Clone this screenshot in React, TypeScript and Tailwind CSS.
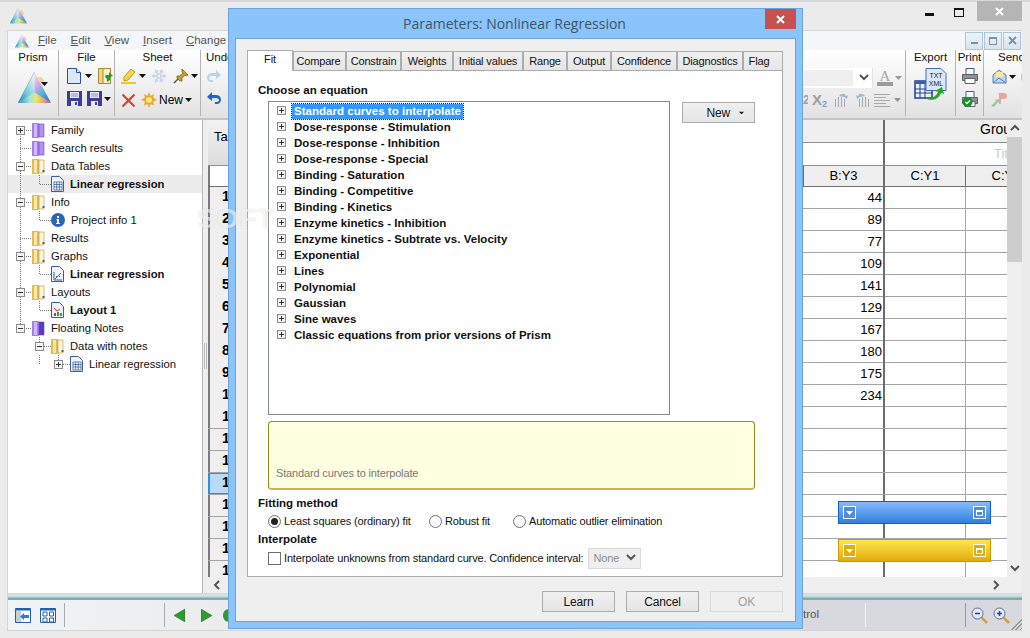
import React from "react";
import { Snowflake } from "lucide-react";

const ui = "font-['Liberation_Sans',Arial,sans-serif]";

const Caret = ({ className = "" }: { className?: string }) => (
  <svg width="7" height="4" viewBox="0 0 7 4" className={`shrink-0 ${className}`}>
    <path d="M0 0h7L3.500 4z" fill="#111" />
  </svg>
);

const Prism = ({ size = 32, id }: { size?: number; id: string }) => (
  <svg width={size} height={size} viewBox="0 0 32 32" className="shrink-0">
    <defs>
      <linearGradient id={`${id}-l`} x1="0.8" y1="0" x2="0" y2="1">
        <stop offset="0" stopColor="#e8f6f8" />
        <stop offset="0.5" stopColor="#7fd0dc" />
        <stop offset="1" stopColor="#1f7fa8" />
      </linearGradient>
      <linearGradient id={`${id}-r`} x1="0.2" y1="0" x2="0.8" y2="1">
        <stop offset="0" stopColor="#fbd3d8" />
        <stop offset="0.35" stopColor="#c9a6e8" />
        <stop offset="0.6" stopColor="#58b8d8" />
        <stop offset="1" stopColor="#3a6fc0" />
      </linearGradient>
      <linearGradient id={`${id}-b`} x1="0" y1="0" x2="1" y2="0">
        <stop offset="0" stopColor="#2f8cb8" />
        <stop offset="0.35" stopColor="#9fe6e0" />
        <stop offset="0.55" stopColor="#e8e86a" />
        <stop offset="0.75" stopColor="#f0a868" />
        <stop offset="1" stopColor="#b050b8" />
      </linearGradient>
    </defs>
    <path d="M16 1 16 21 0 31z" fill={`url(#${id}-l)`} />
    <path d="M16 1 16 21 32 31z" fill={`url(#${id}-r)`} />
    <path d="M0 31 16 21 32 31z" fill={`url(#${id}-b)`} />
    <path d="M19 6l5 8 3-1-4-7z" fill="#f5c26a" opacity=".7" />
    <path d="M0 31 16 1" stroke="#2a7f9f" strokeWidth=".6" opacity=".6" />
  </svg>
);

const PageIcon = () => (
  <svg width="14" height="16" viewBox="0 0 14 16" className="shrink-0">
    <path d="M.5.5h9l4 4v11H.5z" fill="#dbe8fb" stroke="#2b4f9e" />
    <path d="M9.500.5v4h4" fill="#fff" stroke="#2b4f9e" />
  </svg>
);

const OpenIcon = () => (
  <svg width="16" height="16" viewBox="0 0 16 16" className="shrink-0">
    <path d="M.5.5h12v15H.5z" fill="#f2d481" stroke="#a98a3a" />
    <path d="M5 .5h7.500v15H5z" fill="#fdf3c9" stroke="#a98a3a" />
    <path d="M8 7h3V4l4 4-3 1v3l-3 2v-3l-2-2z" fill="#1e9a33" />
  </svg>
);

const Floppy = () => (
  <svg width="15" height="15" viewBox="0 0 15 15" className="shrink-0">
    <path d="M0 0h15v15H0z" fill="#3d3c96" />
    <path d="M3 1h9v6H3z" fill="#e6e9f6" />
    <path d="M4 3h7M4 5h7" stroke="#8b8fc6" />
    <path d="M4 10h7v5H4z" fill="#e6e9f6" />
    <path d="M8 11h2v3H8z" fill="#3d3c96" />
  </svg>
);

const Highlighter = () => (
  <svg width="16" height="16" viewBox="0 0 16 16" className="shrink-0">
    <path d="M3 9 10 1l4 3-7 8-4 1z" fill="#f2d64b" stroke="#b89b22" />
    <path d="M0 14h15v2H0z" fill="#f2c81c" />
  </svg>
);

const Pin = () => (
  <svg width="16" height="16" viewBox="0 0 16 16" className="shrink-0">
    <path d="M9 1l6 6-2 1-1-1-3 3 0 3-2 0-3-3 0-2 3 0 3-3-1-1z" fill="#c9a227" stroke="#75661a" strokeWidth=".8" />
    <path d="M5 11 1 15" stroke="#555" strokeWidth="1.400" />
  </svg>
);

const RedX = () => (
  <svg width="15" height="15" viewBox="0 0 15 15" className="shrink-0">
    <path d="M1.500 1.500l12 12M13.500 1.500l-12 12" stroke="#d8432b" strokeWidth="2.200" />
  </svg>
);

const Sun = () => (
  <svg width="16" height="16" viewBox="0 0 16 16" className="shrink-0">
    <path d="M8 0l1.500 4L13 2l-1 3.500L16 8l-4 1.500 1 4-3.500-1.500L8 16l-1.500-4L3 13.500l1-4L0 8l4-2.500L3 2l3.500 2z" fill="#f0a52a" />
    <circle cx="8" cy="8" r="3" fill="#fde58a" />
  </svg>
);

const Arrow = ({ flip = false, pale = false }: { flip?: boolean; pale?: boolean }) => (
  <svg width="16" height="14" viewBox="0 0 16 14" className={`shrink-0 ${flip ? "-scale-x-100" : ""}`}>
    <path d="M1 6 6 1v3h4c4 0 5 3 5 5s-2 4-4 4H9v-2h2c1 0 2-1 2-2s-1-2-3-2H6v3z" fill={pale ? "#bcd2e8" : "#1d66c9"} />
  </svg>
);

const Folder = ({ purple = false, dark = false }: { purple?: boolean; dark?: boolean }) => {
  const a = purple ? "#a67cf0" : "#e2bb52";
  const b = purple ? "#d8c4fa" : "#fbeeb5";
  const c = purple ? "#6a3fc0" : "#b8923a";
  return (
    <svg width="13" height="16" viewBox="0 0 13 16" className="shrink-0">
      <path d="M0 1h7v15H0z" fill={a} />
      <path d="M2 2h3v13H2z" fill={b} opacity=".85" />
      <path d="M7 2h5v13H7z" fill={dark ? "#5a3cc0" : purple ? "#b493f0" : "#fdf6d8"} stroke={c} strokeWidth=".6" />
      {!purple && <path d="M10.500 12h2v2h-2z" fill="#2f62c4" />}
    </svg>
  );
};

const TableIcon = () => (
  <svg width="13" height="16" viewBox="0 0 13 16" className="shrink-0">
    <path d="M.5.5h8l4 4v11H.5z" fill="#eef3fb" stroke="#3f5f9c" />
    <path d="M3 6h8v8H3z" fill="#fff" stroke="#3f5f9c" strokeWidth=".8" />
    <path d="M3 8.500h8M3 11h8M5.700 6v8M8.300 6v8" stroke="#3f5f9c" strokeWidth=".8" />
  </svg>
);

const InfoIcon = () => (
  <svg width="14" height="14" viewBox="0 0 14 14" className="shrink-0">
    <circle cx="7" cy="7" r="7" fill="#2a63b8" />
    <path d="M6 3h2v2H6zM5.500 6H8v4h1v1H5v-1h1V7h-.5z" fill="#fff" />
  </svg>
);

const GraphIcon = () => (
  <svg width="13" height="16" viewBox="0 0 13 16" className="shrink-0">
    <path d="M.5.5h8l4 4v11H.5z" fill="#eef3fb" stroke="#3f5f9c" />
    <path d="M3 6v8h8" fill="none" stroke="#3f5f9c" />
    <path d="M4 13l6-6" stroke="#d8322b" />
    <path d="M5 10h1v1H5zM8 10h1v1H8z" fill="#2f62c4" />
  </svg>
);

const LayoutIcon = () => (
  <svg width="13" height="16" viewBox="0 0 13 16" className="shrink-0">
    <path d="M.5.5h8l4 4v11H.5z" fill="#eef3fb" stroke="#3f5f9c" />
    <path d="M3 6l3 3 3-2" fill="none" stroke="#d8322b" />
    <path d="M3 11h2v3H3z" fill="#d8322b" />
    <path d="M6 10h2v4H6z" fill="#36a13a" />
    <path d="M9 11h2v3H9z" fill="#36a13a" />
  </svg>
);

type TreeRow = {
  label: string;
  depth: number;
  exp?: "plus" | "minus";
  icon: React.ReactNode;
  bold?: boolean;
  selected?: boolean;
  trunk?: boolean;
};

const treeRows: TreeRow[] = [
  { label: "Family", depth: 0, exp: "plus", icon: <Folder purple />, trunk: true },
  { label: "Search results", depth: 0, icon: <Folder purple />, trunk: true },
  { label: "Data Tables", depth: 0, exp: "minus", icon: <Folder />, trunk: true },
  { label: "Linear regression", depth: 1, icon: <TableIcon />, bold: true, selected: true, trunk: true },
  { label: "Info", depth: 0, exp: "minus", icon: <Folder />, trunk: true },
  { label: "Project info 1", depth: 1, icon: <InfoIcon />, trunk: true },
  { label: "Results", depth: 0, icon: <Folder />, trunk: true },
  { label: "Graphs", depth: 0, exp: "minus", icon: <Folder />, trunk: true },
  { label: "Linear regression", depth: 1, icon: <GraphIcon />, bold: true, trunk: true },
  { label: "Layouts", depth: 0, exp: "minus", icon: <Folder />, trunk: true },
  { label: "Layout 1", depth: 1, icon: <LayoutIcon />, bold: true, trunk: true },
  { label: "Floating Notes", depth: 0, exp: "minus", icon: <Folder purple dark /> },
  { label: "Data with notes", depth: 1, exp: "minus", icon: <Folder /> },
  { label: "Linear regression", depth: 2, exp: "plus", icon: <TableIcon /> },
];

const Expander = ({ x, kind }: { x: number; kind: "plus" | "minus" }) => (
  <g>
    <rect x={x - 3.5} y="5.500" width="8" height="8" fill="#f4f4f4" stroke="#8b8b8b" />
    <path d={`M${x - 2} 9.500h5`} stroke="#333" />
    {kind === "plus" && <path d={`M${x + 0.5} 7v5`} stroke="#333" />}
  </g>
);

// gutter of one tree row: dotted guides plus the expander box
const TreeGutter = ({ row, index }: { row: TreeRow; index: number }) => {
  const x = 11 + row.depth * 19;
  const w = x + 12;
  const dots = { stroke: "#777", strokeDasharray: "1 1", fill: "none" };
  return (
    <svg width={w} height="18" className="shrink-0">
      {row.depth === 0 && <path d={`M11.500 ${index === 0 ? 9 : 0}V${row.trunk ? 18 : 9}`} {...dots} />}
      {row.depth > 0 && row.trunk && <path d="M11.500 0V18" {...dots} />}
      {row.depth === 2 && <path d="M30.500 0V9" {...dots} />}
      <path d={`M${x + 0.5} ${row.depth ? 0 : 9}V9.500H${w}`} {...dots} />
      {row.exp && <Expander x={x} kind={row.exp} />}
    </svg>
  );
};

const TreePanel = () => (
  <div className="flex flex-col w-[194px] shrink-0 bg-white pt-px overflow-hidden text-[11.25px] text-[#111]">
    {treeRows.map((row, i) => (
      <div key={i} className={`flex items-center h-[18px] shrink-0 pl-px ${row.selected ? "bg-[#ececec]" : ""}`}>
        <TreeGutter row={row} index={i} />
        {row.icon}
        <span className={`ml-[6px] whitespace-nowrap ${row.bold ? "font-bold" : ""}`}>{row.label}</span>
      </div>
    ))}
  </div>
);

const values = ["44", "89", "77", "109", "141", "129", "167", "180", "175", "234"];

const gridCols = "grid grid-cols-[42px_553px_80px_82px_81px]";

const DataGrid = () => (
  <div className="relative flex flex-col w-[799px] shrink-0 overflow-hidden bg-white">
    <div className={`${gridCols} grid-rows-[23px_23px] shrink-0`}>
      <div className="row-span-2 border-b border-[#8f8f8f] bg-gradient-to-b from-[#f3f3f3] to-[#dcdcdc] pl-[6px] pt-[9px] text-[13px] leading-[16px] text-black">
        Table
      </div>
      <div className="col-span-2 bg-[#efefef] border-b border-[#8f8f8f]" />
      <div className="col-span-2 bg-[#efefef] border-l-2 border-b border-l-[#6c6c6c] border-b-[#8f8f8f] whitespace-nowrap pl-[95px] text-[14px] leading-[19px] text-black">
        Group C
      </div>
      <div className="col-span-2 border-b border-[#8f8f8f]" />
      <div className="col-span-2 border-l-2 border-b border-l-[#6c6c6c] border-b-[#8f8f8f] whitespace-nowrap pl-[109px] text-[13px] leading-[22px] text-[#c9c9c9]">
        Title
      </div>
    </div>
    <div className={`${gridCols} h-[21px] shrink-0 bg-[#efefef] border-b border-[#6f6f6f] text-[13px] leading-[20px] text-black text-center`}>
      <div className="bg-white border-l-2 border-[#7a7a7a]" />
      <div className="bg-white" />
      <div className="border-l border-[#6f6f6f]">B:Y3</div>
      <div className="border-l-2 border-[#6c6c6c]">C:Y1</div>
      <div className="border-l border-[#6f6f6f]">C:Y2</div>
    </div>
    {Array.from({ length: 18 }, (_, i) => (
      <div key={i} className={`${gridCols} h-[22px] shrink-0 border-b border-[#a4a4a4] text-[13px] leading-[22px] text-black`}>
        <div
          className={`pl-[12px] font-bold text-[14px] leading-[18px] border-l-2 border-[#7a7a7a] ${
            i === 13 ? "bg-[#b9dbfb] outline outline-[#2a8cf0] -outline-offset-1" : "bg-[#efefef]"
          }`}
        >
          {i + 1}
        </div>
        <div />
        <div className="text-right pr-[1px]">{values[i]}</div>
        <div className="border-l-2 border-[#6c6c6c]" />
        <div className="border-l border-[#a4a4a4]" />
      </div>
    ))}
    <NoteBar top="top-[381px]" tone="blue" />
    <NoteBar top="top-[419px]" tone="gold" />
    <div className="absolute left-0 right-0 bottom-0 flex items-center justify-between h-[16px] bg-[#efefef] pl-[5px] pr-[5px]">
      <Chevron dir="left" />
      <Chevron dir="right" />
    </div>
  </div>
);

const Chevron = ({ dir }: { dir: "left" | "right" | "up" | "down" }) => {
  const d = {
    left: "M6 1 2 5l4 4",
    right: "M2 1l4 4-4 4",
    up: "M1 6l4-4 4 4",
    down: "M1 2l4 4 4-4",
  }[dir];
  return (
    <svg width="10" height="10" viewBox="0 0 10 10" className="shrink-0">
      <path d={d} fill="none" stroke="#555" strokeWidth="2" />
    </svg>
  );
};

const NoteBar = ({ top, tone }: { top: string; tone: "blue" | "gold" }) => {
  const blue = tone === "blue";
  const box = `flex items-center justify-center w-[13px] h-[13px] border border-white ${
    blue ? "bg-[#4d8ee4]" : "bg-[#e0ad12]"
  }`;
  return (
    <div
      className={`absolute left-[630px] ${top} flex items-center justify-between w-[153px] h-[23px] px-[4px] border ${
        blue
          ? "border-[#0c62c9] bg-gradient-to-b from-[#86bafa] to-[#2f7fe0]"
          : "border-[#cc9a00] bg-gradient-to-b from-[#fde84a] to-[#e3ab02]"
      }`}
    >
      <div className={box}>
        <svg width="7" height="4" viewBox="0 0 7 4">
          <path d="M0 0h7L3.500 4z" fill="#fff" />
        </svg>
      </div>
      <div className={box}>
        <div className="w-[7px] h-[6px] border border-white border-t-2" />
      </div>
    </div>
  );
};

const VScroll = () => (
  <div className="flex flex-col w-[15px] shrink-0 bg-[#efefef]">
    <div className="flex items-center justify-center h-[17px]">
      <Chevron dir="up" />
    </div>
    <div className="h-[125px] bg-[#cdcdcd]" />
    <div className="flex-1" />
    <div className="flex items-center justify-center h-[16px]">
      <Chevron dir="down" />
    </div>
    <div className="h-[16px]" />
  </div>
);

const RibbonGroup = ({
  label,
  className,
  children,
}: {
  label: string;
  className: string;
  children?: React.ReactNode;
}) => (
  <div className={`flex flex-col items-center shrink-0 h-[66px] border-r border-[#b4b4b4] ${className}`}>
    <div className="h-[14px] leading-[14px] text-[11.5px] text-[#111] whitespace-nowrap">{label}</div>
    {children}
  </div>
);

const Ribbon = () => (
  <div className="flex h-[70px] shrink-0 bg-gradient-to-b from-white to-[#e2e2e2] border-b-2 border-[#c4c4c4] overflow-hidden">
    <RibbonGroup label="Prism" className="w-[51px]">
      <div className="flex items-center mt-[7px]">
        <Prism id="ribbon-prism" size={33} />
        <Caret className="-ml-[10px] -mt-[8px]" />
      </div>
    </RibbonGroup>
    <RibbonGroup label="File" className="w-[56px]">
      <div className="flex flex-col gap-[7px] mt-[4px] w-full pl-[8px]">
        <div className="flex items-center">
          <PageIcon />
          <Caret className="ml-[4px]" />
          <span className="ml-[6px]"><OpenIcon /></span>
        </div>
        <div className="flex items-center">
          <Floppy />
          <span className="ml-[5px]"><Floppy /></span>
          <Caret className="ml-[2px]" />
        </div>
      </div>
    </RibbonGroup>
    <RibbonGroup label="Sheet" className="w-[86px]">
      <div className="flex flex-col gap-[7px] mt-[4px] w-full pl-[6px]">
        <div className="flex items-center">
          <Highlighter />
          <Caret className="ml-[2px]" />
          <Snowflake size={16} color="#c3d4ea" className="ml-[5px] shrink-0" />
          <span className="ml-[6px]"><Pin /></span>
          <Caret className="ml-[2px]" />
        </div>
        <div className="flex items-center text-[12px]">
          <RedX />
          <span className="ml-[5px]"><Sun /></span>
          <span className="ml-[2px]">New</span>
          <Caret className="ml-[2px]" />
        </div>
      </div>
    </RibbonGroup>
    <div className="flex flex-col shrink-0 w-[603px] pl-[5px] h-[66px]">
      <div className="h-[14px] leading-[14px] text-[11.5px] text-[#111]">Undo</div>
      <div className="flex flex-col gap-[8px] mt-[5px]">
        <Arrow flip pale />
        <Arrow />
      </div>
    </div>
    <FontGroup />
    <RibbonGroup label="Export" className="w-[50px]">
      <ExportIcon />
    </RibbonGroup>
    <RibbonGroup label="Print" className="w-[28px]">
      <div className="flex flex-col gap-[7px] mt-[4px]">
        <Printer />
        <Printer check />
      </div>
    </RibbonGroup>
    <div className="flex flex-col pl-[14px] text-[11.5px] leading-[14px] text-[#111]">
      <span>Send</span>
      <div className="flex items-center mt-[5px] -ml-[6px]">
        <svg width="15" height="15" viewBox="0 0 15 15" className="shrink-0">
          <path d="M1 6l6-5 7 5v8H1z" fill="#bcd6f4" stroke="#5a80b8" />
          <path d="M4 3h7v5H4z" fill="#fbe8a6" />
          <path d="M1 14l6-5 7 5" fill="none" stroke="#5a80b8" />
        </svg>
        <Caret className="ml-[2px]" />
        <div className="w-[12px] h-[14px] ml-[5px] rounded-full bg-[#a9c8e0]" />
      </div>
      <div className="flex items-center mt-[7px] -ml-[7px]">
        <svg width="17" height="17" viewBox="0 0 17 17" className="shrink-0">
          <path d="M0 15l5-5-1-1 4-1v4l-1-1-4 5z" fill="#9cc79c" />
          <path d="M7 2h6c2 0 3 1 3 3s-1 3-3 3h-3v5H8V3z" fill="#e8a79e" />
        </svg>
      </div>
    </div>
  </div>
);

const FontGroup = () => (
  <div className="flex flex-col shrink-0 w-[102px] h-[66px] border-r border-[#b4b4b4] pt-[18px] text-[#9aa0a8]">
    <div className="flex items-center">
      <div className="flex items-center justify-between w-[69px] h-[20px] bg-white pr-[3px] border-r border-[#e4e4e4]">
        <div className="w-[49px] h-[16px] bg-[#efefef]" />
        <Chevron dir="down" />
      </div>
      <div className="flex flex-col items-center ml-[4px] leading-[12px] text-[15px] font-['Liberation_Serif',serif] text-[#a6a6a6]">
        A
        <div className="w-[16px] h-[4px] bg-[#9a9a9a]" />
      </div>
      <Caret className="ml-[2px] opacity-40" />
    </div>
    <div className="flex items-center mt-[3px] gap-[4px] -ml-px">
      <span className="text-[12px] font-bold w-[5px] overflow-hidden">2</span>
      <span className="text-[15px] font-bold leading-[18px] w-[18px]">
        X<sub className="text-[9px] text-[#7aa0cc]">2</sub>
      </span>
      <BarsIcon />
      <BarsIcon flip />
      <svg width="16" height="14" viewBox="0 0 16 14" className="shrink-0">
        <path d="M0 1.500h16M0 4.500h12M0 7.500h16M0 10.500h12M0 13.500h16" stroke="#a8a8a8" />
      </svg>
      <Caret className="opacity-40" />
    </div>
  </div>
);

const BarsIcon = ({ flip = false }: { flip?: boolean }) => (
  <svg width="16" height="16" viewBox="0 0 16 16" className={`shrink-0 ${flip ? "-scale-x-100" : ""}`}>
    <path d="M1.500 7v8M4.500 5v10M7.500 5v10M10.500 7v8" stroke="#a8a8a8" />
    <path d="M5 4c2-3 6-3 7 0l2-1-1 4-3-2z" fill="#9db8d8" />
  </svg>
);

const ExportIcon = () => (
  <svg width="33" height="32" viewBox="0 0 33 32" className="mt-[4px] shrink-0">
    <path d="M1 13h17v17H1z" fill="#eaf1fb" stroke="#233f8b" strokeWidth="1.500" />
    <path d="M1 13h17v3H1z" fill="#3a5fb0" />
    <path d="M6 16v14M11 16v14M1 21h17M1 25h17" stroke="#233f8b" />
    <path d="M12 .5h15l5 5v17H12z" fill="#d9e9fb" stroke="#4b6ca8" />
    <text x="22" y="10" textAnchor="middle" fontSize="7" fontFamily="Liberation Sans" fill="#222">TXT</text>
    <text x="22" y="18" textAnchor="middle" fontSize="7" fontFamily="Liberation Sans" fill="#222">XML</text>
    <path d="M11 30c6 1 11-1 13-6l-3-1 7-4 2 7-3-1c-2 6-9 9-16 5z" fill="#28a52e" />
  </svg>
);

const Printer = ({ check = false }: { check?: boolean }) => (
  <svg width="16" height="16" viewBox="0 0 16 16" className="shrink-0">
    <path d="M4 .5h8v6H4z" fill="#fff" stroke="#3c5a9c" />
    <path d="M.5 6.500h15v6H.5z" fill="#8d929a" stroke="#5d6168" />
    <path d="M3 10.500h10v5H3z" fill="#fff" stroke="#5d6168" />
    {check && <circle cx="5.500" cy="11" r="5" fill="#1f8f2d" />}
    {check && <path d="M3.500 11l1.500 1.500 3-3" stroke="#fff" fill="none" strokeWidth="1.300" />}
  </svg>
);

const BottomBar = () => (
  <div className="flex flex-col h-[37px] shrink-0">
    <div className="h-[7px] shrink-0 bg-gradient-to-b from-[#cfdcdc] via-[#d8e4e4] to-[#5fa3a3] border-b border-[#7fb0b0]" />
    <div className="flex flex-1 items-center bg-gradient-to-r from-[#f2f3f4] to-[#d8d9de] to-80% text-[11.5px] text-[#555]">
      <div className="flex items-center gap-[9px] w-[56px] pl-[7px]">
        <svg width="16" height="15" viewBox="0 0 16 15" className="shrink-0">
          <path d="M.5.5h15v14H.5z" fill="#fff" stroke="#2160b0" />
          <path d="M.5.5h15v2H.5z" fill="#2160b0" />
          <path d="M1 3h5v11H1z" fill="#c9cdd4" />
          <path d="M5 8.500 9 5v2h5v3H9v2z" fill="#2a7be8" />
        </svg>
        <svg width="16" height="15" viewBox="0 0 16 15" className="shrink-0">
          <path d="M.5.500h15v14H.5z" fill="#fff" stroke="#2160b0" />
          <path d="M.5.500h15v2H.5z" fill="#2160b0" />
          <path d="M3 4h4v4H3zM9.500 4h4v4h-4zM3 10h4v4H3zM9.500 10h4v4h-4z" fill="none" stroke="#2160b0" />
        </svg>
      </div>
      <div className="w-px h-[24px] bg-[#aaa]" />
      <div className="w-[99px]" />
      <div className="w-px h-[24px] bg-[#aaa]" />
      <div className="flex items-center gap-[16px] pl-[9px] w-[654px]">
        <svg width="11" height="13" viewBox="0 0 11 13" className="shrink-0">
          <path d="M11 0v13L0 6.500z" fill="#2f9a2f" stroke="#1d6d1d" strokeWidth=".5" />
        </svg>
        <svg width="11" height="13" viewBox="0 0 11 13" className="shrink-0">
          <path d="M0 0v13l11-6.500z" fill="#2f9a2f" stroke="#1d6d1d" strokeWidth=".5" />
        </svg>
        <div className="w-[12px] h-[13px] -ml-[5px] rounded-full bg-[#2f9a2f] shrink-0" />
        <span className="ml-auto">Control</span>
      </div>
      <div className="w-px h-[24px] bg-[#f4f4f4] ml-[46px]" />
      <div className="w-[99px]" />
      <div className="w-px h-[24px] bg-[#9a9a9a]" />
      <div className="flex items-center gap-[5px] pl-[5px]">
        <Zoom />
        <Zoom plus />
      </div>
    </div>
  </div>
);

const Zoom = ({ plus = false }: { plus?: boolean }) => (
  <svg width="17" height="17" viewBox="0 0 17 17" className="shrink-0">
    <path d="M10 10l6 6" stroke="#e39a34" strokeWidth="2.500" />
    <circle cx="6.500" cy="6.500" r="5.500" fill="#e6e9f8" stroke="#626a94" />
    <path d="M4 6.500h5" stroke="#1e46a8" strokeWidth="1.500" />
    {plus && <path d="M6.500 4v5" stroke="#1e46a8" strokeWidth="1.500" />}
  </svg>
);

const tabs = [
  { label: "Compare", w: "w-[53px] pr-[2px]" },
  { label: "Constrain", w: "w-[55px]" },
  { label: "Weights", w: "w-[52px]" },
  { label: "Initial values", w: "w-[70px]" },
  { label: "Range", w: "w-[44px]" },
  { label: "Output", w: "w-[44px]" },
  { label: "Confidence", w: "w-[66px]" },
  { label: "Diagnostics", w: "w-[66px]" },
  { label: "Flag", w: "w-[40px] pr-[8px]" },
];

const equations = [
  "Standard curves to interpolate",
  "Dose-response - Stimulation",
  "Dose-response - Inhibition",
  "Dose-response - Special",
  "Binding - Saturation",
  "Binding - Competitive",
  "Binding - Kinetics",
  "Enzyme kinetics - Inhibition",
  "Enzyme kinetics - Subtrate vs. Velocity",
  "Exponential",
  "Lines",
  "Polynomial",
  "Gaussian",
  "Sine waves",
  "Classic equations from prior versions of Prism",
];

const Radio = ({ label, checked = false, className = "" }: { label: string; checked?: boolean; className?: string }) => (
  <div className={`flex items-center shrink-0 ${className}`}>
    <div className="flex items-center justify-center w-[13px] h-[13px] rounded-full border border-[#6f6f6f] bg-white">
      {checked && <div className="w-[7px] h-[7px] rounded-full bg-[#222]" />}
    </div>
    <span className="ml-[3px] whitespace-nowrap">{label}</span>
  </div>
);

const DlgButton = ({ label, disabled = false }: { label: string; disabled?: boolean }) => (
  <div
    className={`flex items-center justify-center w-[73px] h-[21px] border text-[12px] ${
      disabled
        ? "border-[#d9d9d9] bg-[#efefef] text-[#a0a0a0]"
        : "border-[#acacac] bg-gradient-to-b from-[#f0f0f0] to-[#e5e5e5] text-[#111]"
    }`}
  >
    {label}
  </div>
);

const ParamsDialog = () => (
  <div className="absolute left-[228px] top-[8px] flex flex-col w-[575px] h-[621px] bg-[#8ac4fa] border border-[#6ea3d6] text-[11px] tracking-[-0.15px] text-[#111]">
    <div className="relative flex items-center justify-center h-[29px] shrink-0 pr-[2px] font-['Open_Sans',sans-serif] text-[14px] tracking-normal text-[#3f5468]">
      Parameters: Nonlinear Regression
      <div className="absolute right-[6px] top-0 flex items-center justify-center w-[31px] h-[20px] bg-[#c75050]">
        <svg width="9" height="9" viewBox="0 0 9 9">
          <path d="M1 1l7 7M8 1 1 8" stroke="#fff" strokeWidth="2" />
        </svg>
      </div>
    </div>
    <div className="flex flex-col flex-1 mx-[6px] mb-[6px] bg-[#efefef] border border-[#6ea3d6] pl-[11px] pt-[10px]">
      <div className="flex items-end h-[21px] shrink-0">
        <div className="relative z-10 flex items-center justify-center w-[46px] h-[21px] bg-white border border-b-0 border-[#acacac] -mb-px pb-[3px]">
          Fit
        </div>
        {tabs.map((t) => (
          <div
            key={t.label}
            className={`flex items-center justify-center ${t.w} h-[19px] whitespace-nowrap border border-b-0 border-[#acacac] bg-gradient-to-b from-[#f0f0f0] to-[#e5e5e5]`}
          >
            {t.label}
          </div>
        ))}
      </div>
      <div className="flex flex-col w-[536px] h-[507px] shrink-0 bg-white border border-[#acacac] pl-[10px] pt-[11px]">
        <div className="h-[16px] leading-[16px] font-bold text-[11.5px] tracking-normal">Choose an equation</div>
        <div className="flex items-start mt-[3px] ml-[10px]">
          <div className="flex flex-col w-[402px] h-[314px] shrink-0 border border-[#828790] pt-[1px] pl-[8px]">
            {equations.map((eq, i) => (
              <div key={eq} className="flex items-center h-[16px] shrink-0 font-bold text-[11.5px] tracking-[0.03px]">
                <svg width="15" height="16" className="shrink-0">
                  <rect x="0.500" y="3.500" width="8" height="8" fill="#f4f4f4" stroke="#8b8b8b" />
                  <path d="M2 7.500h5M4.500 5v5" stroke="#333" />
                </svg>
                <span
                  className={`whitespace-nowrap px-[2px] leading-[15px] ${
                    i === 0 ? "bg-[#3399ff] text-white outline-1 outline-dotted outline-[#222]" : ""
                  }`}
                >
                  {eq}
                </span>
              </div>
            ))}
          </div>
          <div className="flex items-center justify-end gap-[8px] w-[73px] h-[21px] ml-[12px] mt-px pr-[9px] border border-[#acacac] bg-gradient-to-b from-[#f0f0f0] to-[#e5e5e5] text-[12px]">
            New
            <Caret className="scale-75" />
          </div>
        </div>
        <div className="flex items-end w-[487px] h-[69px] mt-[6px] ml-[10px] rounded-[4px] bg-[#ffffe1] border border-[#9c8616] border-b-2 border-b-[#c9b45a] pl-[7px] pb-[7px] text-[#777]">
          Standard curves to interpolate
        </div>
        <div className="h-[16px] leading-[16px] mt-[5px] font-bold text-[11.5px] tracking-normal">Fitting method</div>
        <div className="flex items-center h-[16px] mt-[2px] ml-[10px]">
          <Radio label="Least squares (ordinary) fit" checked className="w-[161px]" />
          <Radio label="Robust fit" className="w-[84px]" />
          <Radio label="Automatic outlier elimination" />
        </div>
        <div className="h-[16px] leading-[16px] mt-[2px] font-bold text-[11.5px] tracking-normal">Interpolate</div>
        <div className="flex items-center h-[22px] ml-[10px]">
          <div className="w-[13px] h-[13px] border border-[#6f6f6f] bg-white shrink-0" />
          <span className="ml-[3px] whitespace-nowrap">Interpolate unknowns from standard curve. Confidence interval:</span>
          <div className="flex items-center justify-between w-[53px] h-[21px] ml-[5px] pl-[4px] pr-[4px] border border-[#d9d9d9] bg-[#efefef] text-[#8c8c8c]">
            None
            <Chevron dir="down" />
          </div>
        </div>
      </div>
      <div className="flex justify-end gap-[11px] w-[536px] mt-[14px]">
        <DlgButton label="Learn" />
        <DlgButton label="Cancel" />
        <DlgButton label="OK" disabled />
      </div>
    </div>
  </div>
);

const MdiButton = ({ children }: { children: React.ReactNode }) => (
  <div className="flex items-center justify-center w-[18px] h-[18px] border border-[#a9c6dc] bg-gradient-to-b from-[#eef4f8] to-[#d7e4ee]">
    {children}
  </div>
);

export default function App() {
  return (
    <div className={`relative flex flex-col w-[1030px] h-[638px] overflow-hidden bg-[#ebebeb] ${ui}`}>
      <div className="flex items-start h-[30px] shrink-0 border-t-2 border-[#d8d8d8]">
        <div className="ml-[10px] mt-[5px]">
          <Prism id="title-prism" size={17} />
        </div>
        <div className="flex items-start ml-auto mr-[8px]">
          <svg width="9" height="3" viewBox="0 0 9 3" className="mt-[11px] mr-[20px]">
            <path d="M0 0h9v3H0z" fill="#111" />
          </svg>
          <div className="w-[10px] h-[9px] mt-[6px] mr-[13px] border border-t-2 border-[#111]" />
          <div className="flex items-center justify-center w-[45px] h-[20px] -mt-px bg-[#b5b5b5]">
            <svg width="9" height="9" viewBox="0 0 9 9">
              <path d="M1 1l7 7M8 1 1 8" stroke="#fff" strokeWidth="1.800" />
            </svg>
          </div>
        </div>
      </div>

      <div className="flex flex-col w-[1015px] h-[601px] shrink-0 ml-[7px] border border-[#d4d4d4] border-r-0 bg-white">
        <div className="flex items-center h-[19px] shrink-0 bg-[#f4f6f9] text-[11.5px] text-[#555]">
          <span className="ml-[7px]"><Prism id="menu-prism" size={14} /></span>
          <span className="ml-[9px]"><u>F</u>ile</span>
          <span className="ml-[14px]"><u>E</u>dit</span>
          <span className="ml-[14px]"><u>V</u>iew</span>
          <span className="ml-[14px]"><u>I</u>nsert</span>
          <span className="ml-[14px]"><u>C</u>hange</span>
          <div className="flex items-center gap-px ml-auto mr-px">
            <MdiButton>
              <div className="w-[7px] h-[2px] mt-[4px] bg-[#7890a4]" />
            </MdiButton>
            <MdiButton>
              <div className="w-[8px] h-[8px] border border-t-2 border-[#7890a4]" />
            </MdiButton>
            <MdiButton>
              <svg width="9" height="9" viewBox="0 0 9 9">
                <path d="M1 1l7 7M8 1 1 8" stroke="#7890a4" strokeWidth="1.800" />
              </svg>
            </MdiButton>
          </div>
        </div>
        <Ribbon />
        <div className="flex h-[473px] shrink-0">
          <TreePanel />
          <div className="relative w-[6px] shrink-0 bg-[#efefef] border-l border-[#b9b9b9]">
            <div className="absolute left-[1px] top-[223px] w-[3px] h-[26px] border-x border-[#bdbdbd]" />
          </div>
          <DataGrid />
          <VScroll />
        </div>
        <BottomBar />
      </div>

      <ParamsDialog />
      <div className="absolute left-[197px] top-[205px] text-[28px] leading-[28px] font-bold tracking-[1px] text-white/60 [text-shadow:0_0_2px_rgba(0,0,0,0.12)]">SOFT</div>
      <div className="absolute right-[8px] bottom-[8px] w-[12px] h-[12px] bg-[repeating-linear-gradient(135deg,#999_0,#999_1px,transparent_1px,transparent_3px)] [clip-path:polygon(100%_0,100%_100%,0_100%)]" />
    </div>
  );
}
